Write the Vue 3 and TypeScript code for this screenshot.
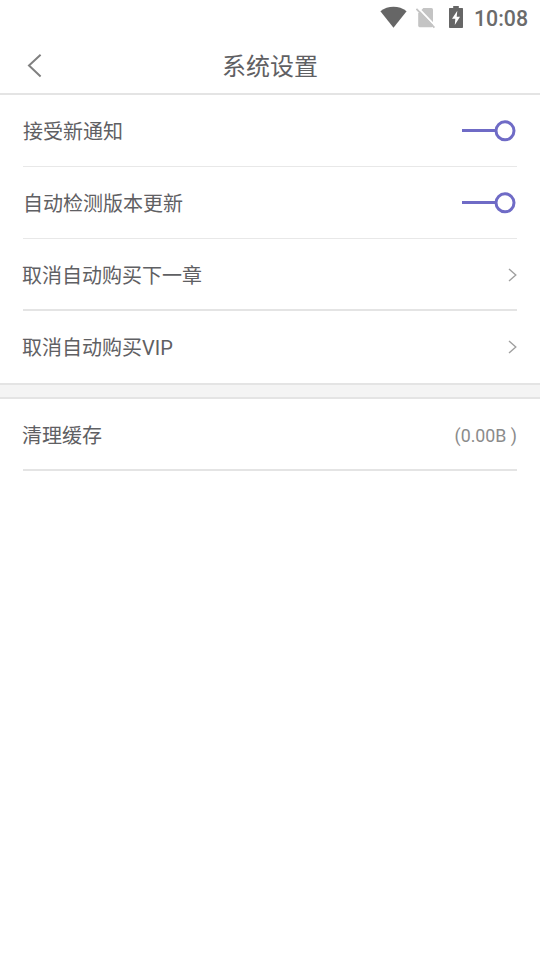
<script setup lang="ts">
import { ref } from 'vue'

interface SettingRow {
  label: string
  kind: 'toggle' | 'link'
  thick?: boolean
  inset?: boolean
  last?: boolean
}

const rows = ref<SettingRow[]>([
  { label: '接受新通知', kind: 'toggle', inset: true },
  { label: '自动检测版本更新', kind: 'toggle', inset: true },
  { label: '取消自动购买下一章', kind: 'link', thick: true },
  { label: '取消自动购买VIP', kind: 'link', last: true },
])
const cacheSize = ref('(0.00B )')
</script>

<template>
  <div class="screen">
    <div class="status">
      <svg class="wifi" width="28" height="22" viewBox="0 0 28 22">
        <path d="M13.5 21.8 L.4 5.2 C8-.6 19-.6 26.6 5.2Z" />
      </svg>
      <svg class="sim" width="20" height="22" viewBox="0 0 20 22">
        <path class="card" d="M7.4 1H15.4Q17 1 17 2.6V18.8Q17 20.2 15.6 20.2H3.6Q2.2 20.2 2.2 18.8V6.2Z" />
        <path class="gap" d="M1.6 .4 L20 19.6" />
        <path class="slash" d="M.4 1.8 L18.4 20.7" />
      </svg>
      <svg class="battery" width="14" height="22" viewBox="0 0 14 22">
        <path d="M4.2 0H9.8V2H13.4Q14 2 14 2.8V21.2Q14 22 13.2 22H.8Q0 22 0 21.2V2.8Q0 2 .6 2H4.2Z" />
        <path class="bolt" d="M8.3 4.7 L3 12.7H6.3L5.8 19L11 10.7H7.7Z" />
      </svg>
      <span class="time">10:08</span>
    </div>
    <header class="bar">
      <svg class="back" width="16" height="24" viewBox="0 0 16 24">
        <path d="M13.6 .8 L2 11.6 L13.6 22.6" />
      </svg>
      <h1>系统设置</h1>
    </header>
    <main>
      <div
        v-for="row in rows"
        :key="row.label"
        class="row"
        :class="{ thick: row.thick, inset: row.inset, last: row.last }"
      >
        <span class="label">{{ row.label }}</span>
        <svg v-if="row.kind === 'toggle'" class="toggle" width="56" height="22" viewBox="0 0 56 22">
          <path d="M1 10.5H34" />
          <circle cx="44" cy="10.8" r="9" />
        </svg>
        <svg v-else class="chevron" width="10" height="14" viewBox="0 0 10 14">
          <path d="M2 .9 L8.8 7 L2 13.1" />
        </svg>
      </div>
      <div class="divider"></div>
      <div class="row thick">
        <span class="label">清理缓存</span>
        <span class="value">{{ cacheSize }}</span>
      </div>
    </main>
  </div>
</template>

<style>
body {
  margin: 0;
  background: #fff;
}
</style>

<style scoped>
.screen {
  width: 540px;
  height: 960px;
  box-sizing: border-box;
  background: #fff;
  overflow: hidden;
  font-family: Roboto, "Noto Sans CJK SC", sans-serif;
  color: #5f6063;
}
svg {
  display: block;
  flex: none;
  fill: none;
}
.status {
  display: flex;
  align-items: flex-start;
  height: 36px;
  box-sizing: border-box;
  padding: 6px 12px 0 380px;
}
.wifi {
  fill: #666;
}
.sim {
  margin: 1px 0 0 8px;
}
.card {
  fill: #c4c4c4;
}
.gap {
  stroke: #fff;
  stroke-width: 2;
}
.slash {
  stroke: #c4c4c4;
  stroke-width: 1.8;
}
.battery {
  margin-left: 13px;
  fill: #666;
}
.bolt {
  fill: #fff;
}
.time {
  margin-left: auto;
  font-size: 21.3px;
  line-height: 25px;
  font-weight: 500;
  color: #6b6b6b;
  white-space: nowrap;
}
.bar {
  display: flex;
  align-items: center;
  height: 59px;
  box-sizing: border-box;
  border-bottom: 2px solid #e4e4e4;
  padding: 0 27px;
}
.back {
  margin-top: 2px;
  stroke: #808080;
  stroke-width: 2;
}
h1 {
  flex: 1;
  margin: 4px 16px 0 0;
  text-align: center;
  font-size: 24px;
  line-height: 36px;
  font-weight: 400;
}
.row {
  display: flex;
  align-items: center;
  justify-content: space-between;
  height: 72px;
  box-sizing: border-box;
  margin: 0 23px;
  border-bottom: 1px solid #e8e8e8;
}
.row.thick {
  border-bottom: 2px solid #e4e4e4;
}
.row.last {
  border-bottom: 0;
}
.label {
  font-size: 20px;
  line-height: 30px;
  margin-left: -1px;
  padding-top: 2px;
}
.inset .label {
  margin-left: 0;
}
.thick .label {
  padding-top: 4px;
}
.toggle {
  stroke: #6f6bc6;
  stroke-width: 3;
}
.chevron {
  stroke: #a0a0a0;
  stroke-width: 1.4;
}
.thick .chevron {
  margin-top: 2px;
}
.value {
  font-size: 17.8px;
  line-height: 26px;
  padding-top: 4px;
  color: #8b8b8b;
}
.divider {
  height: 16px;
  box-sizing: border-box;
  background: #f4f4f4;
  border-top: 2px solid #e4e4e4;
  border-bottom: 2px solid #e4e4e4;
}
</style>
